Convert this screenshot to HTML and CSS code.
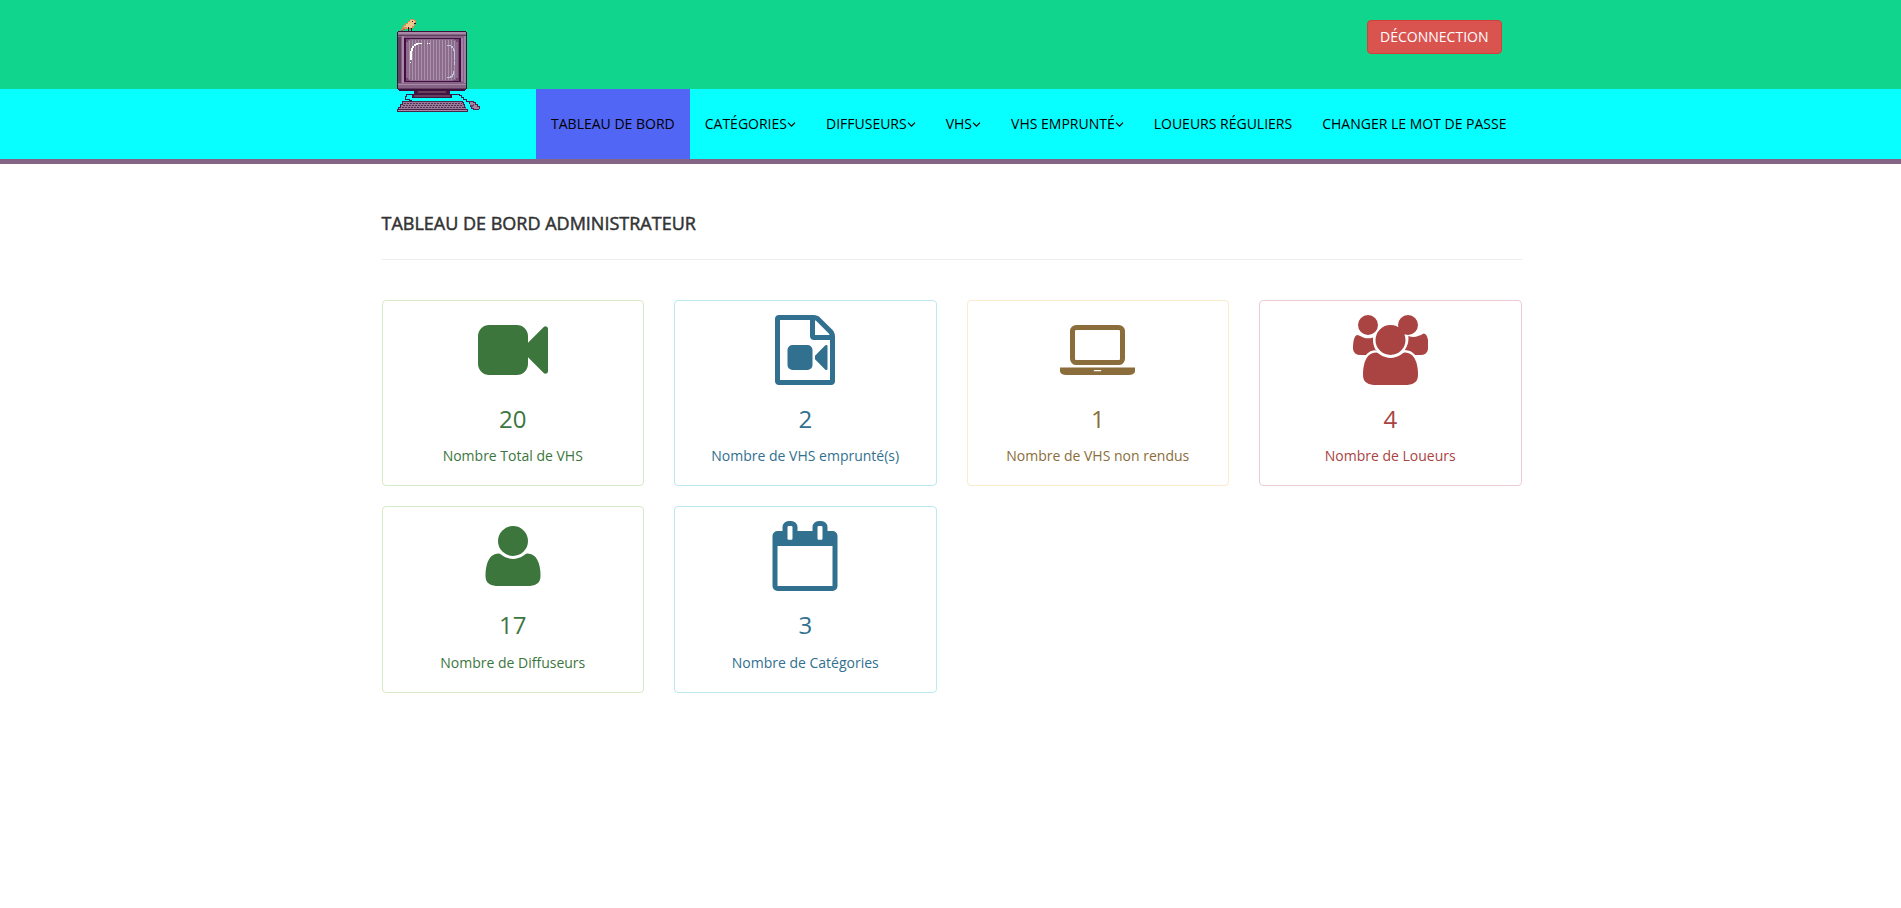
FILE: index.html
```html
<!DOCTYPE html>
<html lang="fr">
<head>
<meta charset="utf-8">
<title>Tableau de bord</title>
<link rel="stylesheet" href="styles.css">
</head>
<body>
<header class="top">
  <div class="container top-row">
    <svg class="logo" viewBox="0 0 330 330" shape-rendering="crispEdges">
      <!-- bird -->
      <path fill="#d98a5a" d="M63 63V57H66V51H69V45H75V39H84V33H90V27H102V30H108V42H105V48H102V54H96V57H75V60H69V63Z"/>
      <path fill="#f0c98a" d="M72 51V48H78V42H84V36H90V30H102V33H105V42H102V48H96V54H81V51Z"/>
      <path fill="#c8503c" d="M63 60h6v3h-6zM69 57h6v3h-6zM87 54h9v3h-9z"/>
      <path fill="#2a1020" d="M96 33h3v3h-3zM102 39h6v3h-6zM84 51h3v15h-3zM93 54h3v12h-3z"/>
      <!-- monitor -->
      <path fill="#3d0f3d" d="M51 66h3v-3h204v3h3v171h-3v3h-3v3H57v-3h-3v-3h-3z"/>
      <path fill="#866486" d="M54 66h204v171H54z"/>
      <path fill="#a88aa8" d="M54 66h204v6H54zM66 78h6v141h-6zM54 222h204v3H54z"/>
      <path fill="#62405f" d="M54 75h204v3H54zM54 81h9v138h-9zM54 234h204v4H54z"/>
      <path fill="#9f83a5" d="M243 84h6v129h-6zM252 78h6v141h-6z"/>
      <path fill="#470c45" d="M71 84h171v132H71z"/>
      <path fill="#704a70" d="M77 87h159v126H77z"/>
      <path fill="#8c6c8b" d="M90 87h132v3h6v6h6v108h-6v6h-9v3H90v-3h-6v-6h-6V96h6v-6h6z"/>
      <path stroke="#ac91ac" stroke-width="3" d="M88 93v114M97 90v120M106 90v120M115 90v120M124 90v120M133 90v120M142 90v120M151 90v120M160 90v120M169 90v120M178 90v120M187 90v120M196 90v120M205 90v120M214 90v120M223 93v114"/>
      <path fill="#fff" d="M108 99h18v3h-12v3h-6v3h-6v6h-3v9h-3v27h-6v-27h3v-9h3v-6h6v-6h6zM141 99h3v3h-3zM147 99h3v3h-3zM90 156h3v3h-3z"/>
      <path fill="#c5c4e5" d="M201 105h12v3h6v6h3v6h3v30h-3v-27h-3v-9h-6v-6h-12zM222 153h3v12h-3zM219 183h3v12h-3v6h-6v3h-12v-3h9v-3h6v-6h3z"/>
      <!-- stand -->
      <path fill="#461443" d="M102 243h108v9h6v12H96v-12h6z"/>
      <path fill="#66415f" d="M114 243h84v6h-84zM102 255h108v6H102z"/>
      <path fill="none" stroke="#34204b" stroke-width="3" d="M96 253H79v6h-3v9h12v3h6v3M213 253h24v3h6v6h6v6h9v6h12"/>
      <!-- keyboard and mouse -->
      <path fill="#4b2449" d="M66 273h183v3h3v6h3v9h3v6h6v9H51v-9h3v-6h6v-9h6z"/>
      <path fill="#9b7b9b" d="M69 276h177v3h3v6h3v9h6v3H57v-3h6v-9h6z"/>
      <path stroke="#523050" stroke-width="3" stroke-dasharray="6 3" d="M72 280.500H246M69 286.500H249M66 292.500H252"/>
      <path fill="#a78aa7" d="M54 299h207v3H54z"/>
      <path fill="#4a2849" d="M267 273h15v3h6v6h6v6h6v9h-3v3h-18v-3h-6v-6h-3v-9h-3z"/>
      <path fill="#a386a3" d="M270 276h9v3h6v6h6v6h6v6h-15v-3h-6v-9h-6z"/>
      <path fill="#684668" d="M273 285h6v-3h3v6h-3v3h-6z"/>
    </svg>
    <a class="logout">DÉCONNECTION</a>
  </div>
</header>
<nav class="menu">
  <ul class="container menu-list">
    <li class="active">TABLEAU DE BORD</li>
    <li>CATÉGORIES<svg class="caret" viewBox="0 0 9 14"><path d="M1 5.700 4.500 9.200 8 5.700"/></svg></li>
    <li>DIFFUSEURS<svg class="caret" viewBox="0 0 9 14"><path d="M1 5.700 4.500 9.200 8 5.700"/></svg></li>
    <li>VHS<svg class="caret" viewBox="0 0 9 14"><path d="M1 5.700 4.500 9.200 8 5.700"/></svg></li>
    <li>VHS EMPRUNTÉ<svg class="caret" viewBox="0 0 9 14"><path d="M1 5.700 4.500 9.200 8 5.700"/></svg></li>
    <li>LOUEURS RÉGULIERS</li>
    <li>CHANGER LE MOT DE PASSE</li>
  </ul>
</nav>
<main class="container">
  <h4 class="title">TABLEAU DE BORD ADMINISTRATEUR</h4>
  <div class="cards">
    <div class="card success">
      <svg class="icon" viewBox="0 0 1792 1792"><path d="M1792 352v1088q0 42-39 59-13 5-25 5-27 0-45-19l-403-403v166q0 119-84.500 203.500t-203.500 84.500h-704q-119 0-203.500-84.500t-84.500-203.500v-704q0-119 84.500-203.500t203.500-84.500h704q119 0 203.500 84.500t84.500 203.500v165l403-402q18-19 45-19 12 0 25 5 39 17 39 59z"/></svg>
      <h3>20</h3><p>Nombre Total de VHS</p>
    </div>
    <div class="card info">
      <svg class="icon" viewBox="0 0 1792 1792"><path d="M1596 380q28 28 48 76t20 88v1152q0 40-28 68t-68 28h-1344q-40 0-68-28t-28-68v-1600q0-40 28-68t68-28h896q40 0 88 20t76 48zm-444-244v376h376q-10-29-22-41l-313-313q-12-12-41-22zm384 1528v-1024h-416q-40 0-68-28t-28-68v-416h-768v1536h1280zm-576-896q52 0 90 38t38 90v384q0 52-38 90t-90 38h-384q-52 0-90-38t-38-90v-384q0-52 38-90t90-38h384zm492 2q20 8 20 30v576q0 22-20 30-8 2-12 2-14 0-23-9l-265-266v-90l265-266q9-9 23-9 4 0 12 2z"/></svg>
      <h3>2</h3><p>Nombre de VHS emprunté(s)</p>
    </div>
    <div class="card warning">
      <svg class="icon wide" viewBox="0 -128 1920 1792"><path d="M416 1152q-66 0-113-47t-47-113v-704q0-66 47-113t113-47h1088q66 0 113 47t47 113v704q0 66-47 113t-113 47h-1088zm-32-864v704q0 13 9.500 22.500t22.500 9.500h1088q13 0 22.500-9.500t9.500-22.500v-704q0-13-9.500-22.500t-22.500-9.500h-1088q-13 0-22.500 9.500t-9.500 22.500zM1760 1216h160v96q0 40-47 68t-113 28h-1600q-66 0-113-28t-47-68v-96h1760zm-720 96q16 0 16-16t-16-16h-160q-16 0-16 16t16 16h160z"/></svg>
      <h3>1</h3><p>Nombre de VHS non rendus</p>
    </div>
    <div class="card danger">
      <svg class="icon wide" viewBox="0 0 1920 1792"><path d="M593 896q-162 5-265 128h-134q-82 0-138-40.500t-56-118.500q0-353 124-353 6 0 43.500 21t97.500 42.500 119 21.500q67 0 133-23-5 37-5 66 0 159 93 293zm1071 637q0 120-73 189.500t-194 69.500h-874q-121 0-194-69.500t-73-189.500q0-53 3.500-103.500t14-109 26.500-108.500 43-97.500 62-81 85.500-53.500 111.500-20q10 0 43 21.500t73 48 107 48 135 21.500 135-21.500 107-48 73-48 43-21.500q61 0 111.500 20t85.500 53.500 62 81 43 97.500 26.500 108.500 14 109 3.500 103.500zm-1024-1277q0 106-75 181t-181 75-181-75-75-181 75-181 181-75 181 75 75 181zm704 384q0 159-112.500 271.500t-271.500 112.500-271.500-112.500-112.500-271.500 112.500-271.500 271.500-112.500 271.500 112.500 112.500 271.500zm576 225q0 78-56 118.500t-138 40.500h-134q-103-123-265-128 93-134 93-293 0-29-5-66 66 23 133 23 59 0 119-21.500t97.500-42.500 43.500-21q124 0 124 353zm-256-609q0 106-75 181t-181 75-181-75-75-181 75-181 181-75 181 75 75 181z"/></svg>
      <h3>4</h3><p>Nombre de Loueurs</p>
    </div>
    <div class="card success">
      <svg class="icon" viewBox="0 0 1792 1792"><path d="M1600 1405q0 120-73 189.500t-194 69.500h-874q-121 0-194-69.500t-73-189.500q0-53 3.500-103.500t14-109 26.500-108.500 43-97.500 62-81 85.500-53.500 111.500-20q10 0 43 21.500t73 48 107 48 135 21.500 135-21.500 107-48 73-48 43-21.500q61 0 111.500 20t85.500 53.500 62 81 43 97.500 26.500 108.500 14 109 3.500 103.500zM1280 512q0 159-112.500 271.500t-271.500 112.500-271.500-112.500-112.500-271.500 112.500-271.500 271.500-112.500 271.500 112.500 112.500 271.500z"/></svg>
      <h3>17</h3><p>Nombre de Diffuseurs</p>
    </div>
    <div class="card info">
      <svg class="icon" viewBox="0 0 1792 1792"><path d="M192 1664h1408v-1024h-1408v1024zm384-1216v-288q0-14-9-23t-23-9h-64q-14 0-23 9t-9 23v288q0 14 9 23t23 9h64q14 0 23-9t9-23zm768 0v-288q0-14-9-23t-23-9h-64q-14 0-23 9t-9 23v288q0 14 9 23t23 9h64q14 0 23-9t9-23zm384-64v1280q0 52-38 90t-90 38h-1408q-52 0-90-38t-38-90v-1280q0-52 38-90t90-38h128v-96q0-66 47-113t113-47h64q66 0 113 47t47 113v96h384v-96q0-66 47-113t113-47h64q66 0 113 47t47 113v96h128q52 0 90 38t38 90z"/></svg>
      <h3>3</h3><p>Nombre de Catégories</p>
    </div>
  </div>
</main>
</body>
</html>
```
FILE: styles.css
```css
* { box-sizing: border-box; }
body {
  margin: 0;
  font-family: "Open Sans", sans-serif;
  font-size: 14px;
  line-height: 28px;
  color: #333;
  background: #fff;
}
.container {
  width: 1140px;
  margin: 0 379.500px 0 381.500px;
}
.top {
  height: 89px;
  background: #0fd68c;
}
.top-row {
  display: flex;
  justify-content: space-between;
  align-items: flex-start;
}
.logo {
  position: relative;
  z-index: 2;
  width: 110px;
  height: 110px;
  margin: 10px 0 -31px -1.500px;
}
.logout {
  margin: 20px 20px 0 0;
  padding: 6px 12px;
  border: 1px solid #d43f3a;
  border-radius: 4px;
  background: #d9534f;
  color: #fff;
  line-height: 20px;
}
.menu {
  background: #08ffff;
  border-bottom: 5px solid #866486;
}
.menu-list {
  display: flex;
  justify-content: flex-end;
  padding: 0;
  list-style: none;
  color: #000;
  font-size: 14px;
  line-height: 20px;
}
.menu-list li {
  display: flex;
  align-items: center;
  height: 70px;
  padding: 0 15px;
  white-space: nowrap;
}
.menu-list .active { background: #5166f5; }
.caret {
  width: 9px;
  height: 14px;
  fill: none;
  stroke: currentColor;
  stroke-width: 1.2;
}
.title {
  margin: 0 0 39.600px;
  padding: 45px 0 22px;
  border-bottom: 1px solid #eee;
  font-size: 18px;
  font-weight: 400;
  line-height: 28px;
  -webkit-text-stroke: 0.5px currentColor;
}
.cards {
  display: grid;
  grid-template-columns: repeat(4, 1fr);
  gap: 20px 30px;
}
.card {
  height: 186.500px;
  padding: 15px;
  border: 1px solid;
  border-radius: 4px;
  text-align: center;
}
.icon {
  display: block;
  width: 70px;
  height: 70px;
  margin: -1px auto 1px;
  fill: currentColor;
}
.wide { width: 75px; }
.card h3 {
  margin: 21px 0 10px;
  font-size: 24px;
  font-weight: 400;
  line-height: 26.400px;
}
.card p { margin: 0; }
.success { color: #3c763d; border-color: #d6e9c6; }
.info { color: #31708f; border-color: #bce8f1; }
.warning { color: #8a6d3b; border-color: #faebcc; }
.danger { color: #a94442; border-color: #ebccd1; }
```
